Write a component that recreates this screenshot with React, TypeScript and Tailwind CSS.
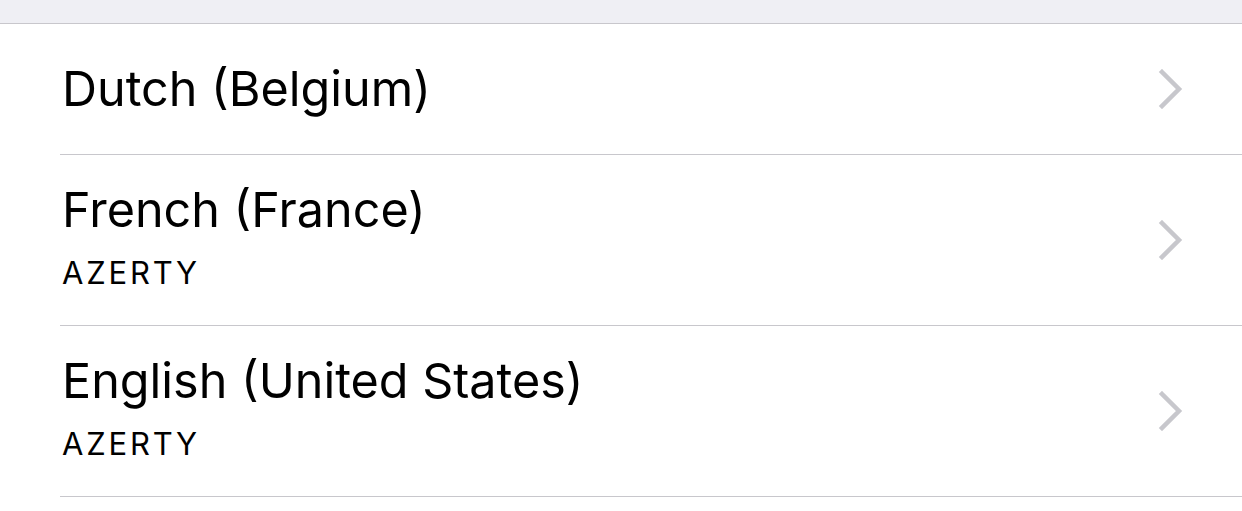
import React from 'react';

type Row = { title: string; subtitle?: string };

const rows: Row[] = [
  { title: 'Dutch (Belgium)' },
  { title: 'French (France)', subtitle: 'AZERTY' },
  { title: 'English (United States)', subtitle: 'AZERTY' },
];

function Chevron() {
  return (
    <svg width="26" height="40" viewBox="0 0 26 40" fill="none" className="shrink-0">
      <path d="M4 3 L21 20 L4 37" stroke="#c7c7cc" strokeWidth="4.5" strokeLinecap="square" strokeLinejoin="miter" />
    </svg>
  );
}

export default function App() {
  return (
    <div className="w-[1242px] h-[511px] bg-white overflow-hidden" style={{ fontFamily: 'Inter, "Noto Sans", sans-serif' }}>
      <div className="h-[24px] bg-[#efeff4] border-b border-[#c8c7cc]" />
      {rows.map((row) => (
        <div key={row.title} className="pl-[60px]">
          <div
            className={`flex items-center justify-between border-b border-[#c8c7cc] pr-[58px] ${
              row.subtitle ? 'h-[171px]' : 'h-[131px]'
            }`}
          >
            <div className={`pl-[2px] text-black ${row.subtitle ? 'pb-[7px]' : ''}`}>
              <div className="text-[48.5px] leading-[56px]">{row.title}</div>
              {row.subtitle && (
                <div className="text-[31px] leading-[36px] mt-[17px] tracking-[2.8px]">{row.subtitle}</div>
              )}
            </div>
            <Chevron />
          </div>
        </div>
      ))}
    </div>
  );
}
